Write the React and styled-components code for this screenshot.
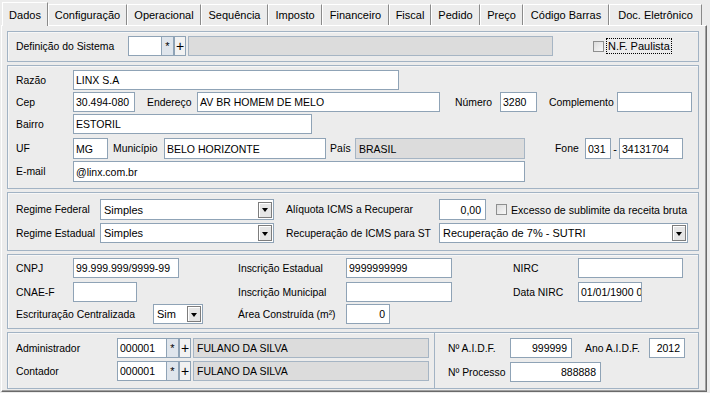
import React from "react";
import styled, { createGlobalStyle } from "styled-components";

const GlobalStyle = createGlobalStyle`
  html, body {
    margin: 0;
    padding: 0;
    background: #ececec;
  }
  body {
    font-family: "Liberation Sans", Arial, sans-serif;
    font-size: 11px;
    color: #000;
  }
  * {
    box-sizing: border-box;
  }
`;

const tabs = [
  ["Dados", 46],
  ["Configuração", 79],
  ["Operacional", 74],
  ["Sequência", 67],
  ["Imposto", 54],
  ["Financeiro", 67],
  ["Fiscal", 42],
  ["Pedido", 49],
  ["Preço", 43],
  ["Código Barras", 86],
  ["Doc. Eletrônico", 93],
];

const App = () => {
  return (
    <Window>
      <GlobalStyle />
      <TabBar>
        {tabs.map(([name, w], i) => (
          <Tab key={name} $w={w} $active={i === 0}>
            {name}
          </Tab>
        ))}
      </TabBar>

      <TabBody>
        {/* Definição do sistema */}
        <Panel $pt={4} $pb={5}>
          <Row $h={20}>
            <Label $w={112}>Definição do Sistema</Label>
            <Field $w={34} />
            <MiniBtn>*</MiniBtn>
            <MiniBtn $plus>+</MiniBtn>
            <Field $w={365} $off $ml={2} />
            <Check $ml={40} />
            <FocusText>N.F. Paulista</FocusText>
          </Row>
        </Panel>

        {/* Endereço */}
        <Panel $pt={4} $pb={6}>
          <Row $h={20}>
            <Label $w={57}>Razão</Label>
            <Field $w={326}>LINX S.A</Field>
          </Row>
          <Row $h={20} $mt={2}>
            <Label $w={57}>Cep</Label>
            <Field $w={62}>30.494-080</Field>
            <Label $w={50} $ml={12}>Endereço</Label>
            <Field $w={243}>AV BR HOMEM DE MELO</Field>
            <Label $w={45} $ml={15}>Número</Label>
            <Field $w={37}>3280</Field>
            <Label $w={68} $ml={12}>Complemento</Label>
            <Field $w={75} />
          </Row>
          <Row $h={20} $mt={2}>
            <Label $w={57}>Bairro</Label>
            <Field $w={239}>ESTORIL</Field>
          </Row>
          <Row $h={21} $mt={4}>
            <Label $w={57}>UF</Label>
            <Field $w={35}>MG</Field>
            <Label $w={51} $ml={5}>Município</Label>
            <Field $w={162}>BELO HORIZONTE</Field>
            <Label $w={25} $ml={4}>País</Label>
            <Field $w={170} $off>BRASIL</Field>
            <Label $w={30} $ml={30}>Fone</Label>
            <Field $w={26}>031</Field>
            <Dash>-</Dash>
            <Field $w={64}>34131704</Field>
          </Row>
          <Row $h={21} $mt={2}>
            <Label $w={57}>E-mail</Label>
            <Field $w={452}>@linx.com.br</Field>
          </Row>
        </Panel>

        {/* Regime */}
        <Panel $pt={6} $pb={7}>
          <Row $h={21}>
            <Label $w={84}>Regime Federal</Label>
            <Select $w={174}>Simples</Select>
            <Label $w={153} $ml={12}>Alíquota ICMS a Recuperar</Label>
            <Field $w={47} $right>0,00</Field>
            <Check $ml={10} />
            <CheckText>Excesso de sublimite da receita bruta</CheckText>
          </Row>
          <Row $h={20} $mt={3}>
            <Label $w={84}>Regime Estadual</Label>
            <Select $w={174}>Simples</Select>
            <Label $w={153} $ml={12}>Recuperação de ICMS para ST</Label>
            <Select $w={249}>Recuperação de 7% - SUTRI</Select>
          </Row>
        </Panel>

        {/* Documentos */}
        <Panel $pt={3} $pb={4}>
          <Row $h={20}>
            <Label $w={57}>CNPJ</Label>
            <Field $w={106}>99.999.999/9999-99</Field>
            <Label $w={108} $ml={59}>Inscrição Estadual</Label>
            <Field $w={106}>9999999999</Field>
            <Label $w={65} $ml={61}>NIRC</Label>
            <Field $w={105} />
          </Row>
          <Row $h={20} $mt={4}>
            <Label $w={57}>CNAE-F</Label>
            <Field $w={64} />
            <Label $w={108} $ml={101}>Inscrição Municipal</Label>
            <Field $w={106} />
            <Label $w={65} $ml={61}>Data NIRC</Label>
            <Field $w={64}>01/01/1900 00:00</Field>
          </Row>
          <Row $h={20} $mt={2}>
            <Label $w={137}>Escrituração Centralizada</Label>
            <Select $w={50}>Sim</Select>
            <Label $w={108} $ml={35}>Área Construída (m²)</Label>
            <Field $w={44} $right>0</Field>
          </Row>
        </Panel>

        {/* Responsáveis */}
        <SplitPanel>
          <Section $w={427} $pl={8} $divider>
            <Row $h={20}>
              <Label $w={101}>Administrador</Label>
              <Field $w={50}>000001</Field>
              <MiniBtn>*</MiniBtn>
              <MiniBtn $plus>+</MiniBtn>
              <Field $w={236} $off $ml={2}>FULANO DA SILVA</Field>
            </Row>
            <Row $h={20} $mt={3}>
              <Label $w={101}>Contador</Label>
              <Field $w={50}>000001</Field>
              <MiniBtn>*</MiniBtn>
              <MiniBtn $plus>+</MiniBtn>
              <Field $w={236} $off $ml={2}>FULANO DA SILVA</Field>
            </Row>
          </Section>
          <Section $pl={13}>
            <Row $h={20}>
              <Label $w={62}>Nº A.I.D.F.</Label>
              <Field $w={62} $right>999999</Field>
              <Label $w={64} $ml={13}>Ano A.I.D.F.</Label>
              <Field $w={36} $right>2012</Field>
            </Row>
            <Row $h={20} $mt={4}>
              <Label $w={62}>Nº Processo</Label>
              <Field $w={91} $right>888888</Field>
            </Row>
          </Section>
        </SplitPanel>
      </TabBody>
    </Window>
  );
};

const Window = styled.div`
  width: 710px;
  height: 393px;
  padding: 2px 0 0 1px;
  background: #ececec;
`;

const TabBar = styled.div`
  display: flex;
  align-items: flex-end;
  height: 23px;
  margin-left: 1px;
  position: relative;
  z-index: 1;
`;

const Tab = styled.div`
  flex: none;
  width: ${(p) => p.$w}px;
  height: ${(p) => (p.$active ? 24 : 21)}px;
  margin-bottom: ${(p) => (p.$active ? -1 : 0)}px;
  padding-top: ${(p) => (p.$active ? 6 : 4)}px;
  border-top: 1px solid #fff;
  border-left: 1px solid #fff;
  border-right: 1px solid #8a8a8a;
  background: #ececec;
  text-align: center;
  line-height: 13px;
  font-size: 11px;
  white-space: nowrap;
`;

const TabBody = styled.div`
  width: 706px;
  height: 367px;
  border-top: 1px solid #fff;
  border-left: 1px solid #fff;
  border-right: 1px solid #6a6a6a;
  border-bottom: 1px solid #6a6a6a;
  box-shadow: inset -1px -1px 0 #a0a0a0;
  padding: 5px 6px 0 5px;
  display: flex;
  flex-direction: column;
  gap: 2px;
`;

const Panel = styled.div`
  width: 692px;
  border: 1px solid #a2b3c4;
  box-shadow: inset 1px 1px 0 #f7f7f7;
  padding: ${(p) => p.$pt}px 0 ${(p) => p.$pb}px 8px;

  & + & {
    margin-top: 1px;
  }
`;

const SplitPanel = styled(Panel)`
  display: flex;
  padding: 0;
`;

const Section = styled.div`
  flex: ${(p) => (p.$w ? "none" : "1")};
  width: ${(p) => (p.$w ? `${p.$w}px` : "auto")};
  padding: 5px 0 6px ${(p) => p.$pl}px;
  border-right: ${(p) => (p.$divider ? "1px solid #a2b3c4" : "none")};
`;

const Row = styled.div`
  display: flex;
  align-items: center;
  height: ${(p) => p.$h}px;
  margin-top: ${(p) => p.$mt || 0}px;
`;

const Label = styled.span`
  flex: none;
  width: ${(p) => p.$w}px;
  margin-left: ${(p) => p.$ml || 0}px;
  white-space: nowrap;
  font-size: 10.4px;
`;

const Field = styled.div`
  flex: none;
  display: flex;
  align-items: center;
  justify-content: ${(p) => (p.$right ? "flex-end" : "flex-start")};
  width: ${(p) => p.$w}px;
  height: 100%;
  margin-left: ${(p) => p.$ml || 0}px;
  padding: 0 ${(p) => (p.$right ? 4 : 2)}px 0 ${(p) => (p.$off ? 3 : 2)}px;
  border: 1px solid ${(p) => (p.$off ? "#a6b5c4" : "#8fa3b6")};
  background: ${(p) => (p.$off ? "#dcdcdc" : "#fff")};
  font-size: 10.5px;
  white-space: nowrap;
  overflow: hidden;
`;

const MiniBtn = styled.div`
  flex: none;
  width: 12px;
  height: 100%;
  display: flex;
  align-items: center;
  justify-content: center;
  border: 1px solid #8fa3b6;
  border-left: ${(p) => (p.$plus ? "1px solid #8fa3b6" : "none")};
  background: ${(p) => (p.$plus ? "#f2f2f2" : "#dfe5ec")};
  font-size: ${(p) => (p.$plus ? 14 : 11)}px;
  line-height: 1;
`;

const Dash = styled.span`
  flex: none;
  width: 8px;
  text-align: center;
`;

const SelectWrap = styled.div`
  flex: none;
  display: flex;
  align-items: center;
  justify-content: space-between;
  width: ${(p) => p.$w}px;
  height: 100%;
  padding: 0 1px 0 3px;
  border: 1px solid #8fa3b6;
  background: #fff;
  font-size: 11px;
  white-space: nowrap;
`;

const DropBtn = styled.span`
  flex: none;
  width: 14px;
  height: 16px;
  display: flex;
  align-items: center;
  justify-content: center;
  border: 1px solid #7d7d7d;
  box-shadow: inset 1px 1px 0 #fff;
  background: #e6e6e6;

  &::after {
    content: "";
    border-left: 3.5px solid transparent;
    border-right: 3.5px solid transparent;
    border-top: 4px solid #000;
    margin-top: 1px;
  }
`;

const Select = ({ $w, children }) => (
  <SelectWrap $w={$w}>
    <span>{children}</span>
    <DropBtn />
  </SelectWrap>
);

const Check = styled.span`
  flex: none;
  width: 11px;
  height: 11px;
  margin-left: ${(p) => p.$ml || 0}px;
  border: 1px solid #8e8f8f;
  background: linear-gradient(135deg, #dcdcdc, #f8f8f8);
`;

const CheckText = styled.span`
  margin-left: 4px;
  white-space: nowrap;
  font-size: 10.6px;
`;

const FocusText = styled.span`
  margin-left: 2px;
  padding: 1px 1px;
  border: 1px dotted #000;
  line-height: 12px;
  font-size: 11px;
  white-space: nowrap;
`;

export default App;
